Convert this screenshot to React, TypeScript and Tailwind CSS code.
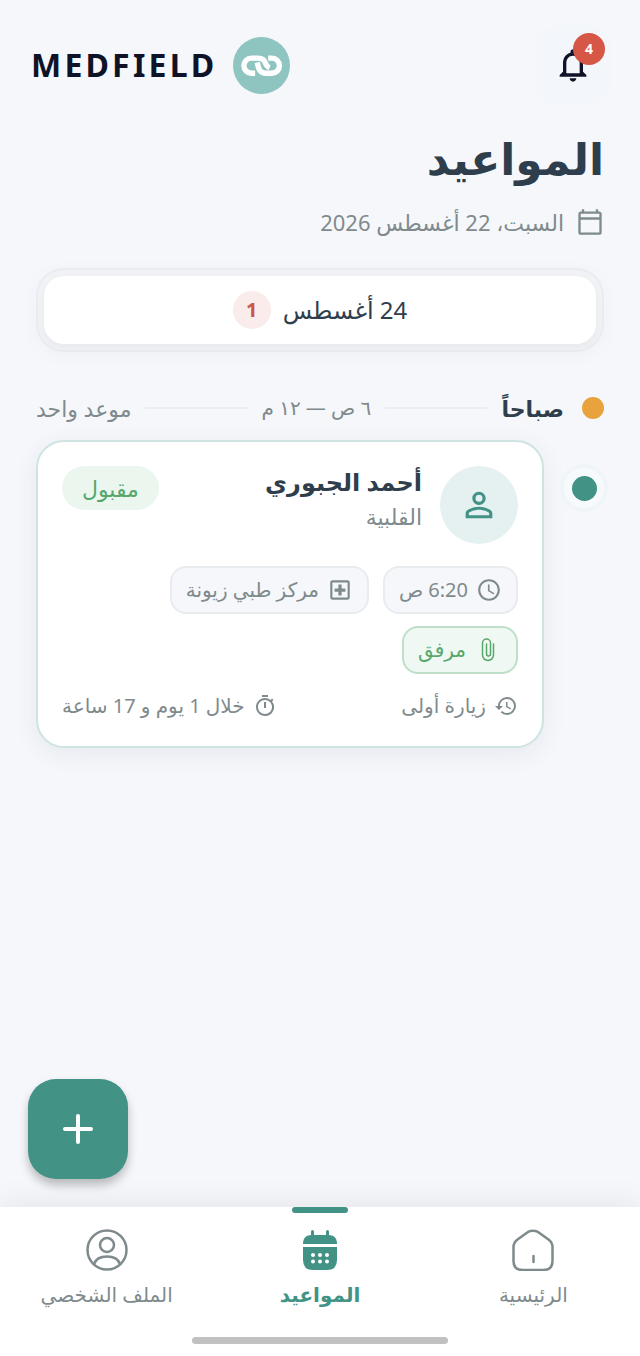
import type { ReactNode } from 'react'
import {
  MdAccessTime,
  MdHistory,
  MdNotificationsNone,
  MdOutlineCalendarToday,
  MdOutlineLocalHospital,
  MdOutlineTimer,
  MdPersonOutline,
} from 'react-icons/md'

function ChainLogo() {
  return (
    <svg viewBox="0 0 170 170" className="size-[57px]" aria-hidden="true">
      <circle cx="85" cy="85" r="85" fill="#8fc5c0" />
      <g fill="none" stroke="#fff" strokeWidth="16">
        <path d="M66 108H55a22.500 22.500 0 0 1 0-45H75Q91 63 96 76Q100 88 109 92" />
        <path d="M105 63H116a22.500 22.500 0 0 1 0 45H98Q82 108 77 94Q74 84 72 76" />
      </g>
    </svg>
  )
}

function ClipIcon() {
  return (
    <svg viewBox="0 0 28 28" className="size-7" fill="none" stroke="currentColor" strokeWidth="1.5" strokeLinecap="round" aria-hidden="true">
      <path d="M19.500 8v11a5.500 5.500 0 0 1-11 0V7a4 4 0 0 1 8 0v11a2 2 0 0 1-4 0V8" />
    </svg>
  )
}

function HomeIcon() {
  return (
    <svg viewBox="0 0 42 42" className="size-[42px]" fill="none" stroke="currentColor" strokeWidth="2.5" strokeLinecap="round" strokeLinejoin="round" aria-hidden="true">
      <path d="M16 2.900Q21 .5 26 2.900L36.500 10.500Q40.500 13.500 40.500 18V32Q40.500 41 31.500 41H10.500Q1.500 41 1.500 32V18Q1.500 13.500 5.500 10.500Z" />
      <path d="M21.500 27v6" />
    </svg>
  )
}

function CalendarIcon() {
  return (
    <svg viewBox="0 0 36 42" className="h-[42px] w-9" fill="currentColor" aria-hidden="true">
      <rect x="9" y="1" width="3" height="9" rx="1.500" />
      <rect x="24" y="1" width="3" height="9" rx="1.500" />
      <path d="M1 15C1 9 4 6 10 6H26C32 6 35 9 35 15Z" />
      <path d="M1 18H35V31Q35 41 25 41H11Q1 41 1 31Z" />
      <g fill="#fff">
        <circle cx="11" cy="26" r="2" />
        <circle cx="18" cy="26" r="2" />
        <circle cx="25" cy="26" r="2" />
        <circle cx="11" cy="32.500" r="2" />
        <circle cx="18" cy="32.500" r="2" />
        <circle cx="25" cy="32.500" r="2" />
      </g>
    </svg>
  )
}

function ProfileIcon() {
  return (
    <svg viewBox="0 0 42 42" className="size-[42px]" fill="none" stroke="currentColor" strokeWidth="2.500" aria-hidden="true">
      <circle cx="21" cy="21" r="19.500" />
      <circle cx="21" cy="16" r="7" />
      <path d="M8 35C10 29 15 27.500 21 27.500S32 29 34 35" />
    </svg>
  )
}

function Chip({ icon, text, green }: { icon: ReactNode; text: string; green?: boolean }) {
  return (
    <li
      className={
        green
          ? 'flex h-12 items-center gap-2 rounded-2xl border-2 border-[#bfe0c8] bg-[#eff8f2] px-3.5 text-[#57a76c]'
          : 'flex h-12 items-center gap-2 rounded-2xl border-2 border-[#e9ecef] bg-[#f5f7fb] px-3.5 text-[#7f8a8c]'
      }
    >
      {icon}
      <span className="text-xl leading-7">{text}</span>
    </li>
  )
}

function NavItem({ icon, text, active }: { icon: ReactNode; text: string; active?: boolean }) {
  return (
    <li className="flex-1">
      <a
        href="#"
        aria-current={active ? 'page' : undefined}
        className={
          active
            ? 'flex flex-col items-center text-xl leading-7 font-bold text-[#429286]'
            : 'flex flex-col items-center text-xl leading-7 text-[#7f8a8c]'
        }
      >
        <span className={active ? 'mb-4 h-1.5 w-14 rounded-full bg-[#429286]' : 'mb-4 h-1.5 w-14'} />
        {icon}
        <span className="mt-2.5">{text}</span>
      </a>
    </li>
  )
}

export default function App() {
  return (
    <div
      dir="rtl"
      lang="ar"
      className="flex min-h-screen flex-col bg-[#f5f7fb] font-['Noto_Sans','DejaVu_Sans',sans-serif] text-[#2f3e4c]"
    >
      <header className="flex items-center justify-between pt-[26px] pr-7 pl-[31px]">
        <button
          type="button"
          aria-label="الإشعارات"
          className="relative flex size-[78px] items-center justify-center rounded-3xl bg-[#f3f7fb] text-[#0f1328]"
        >
          <MdNotificationsNone className="size-10" />
          <span className="absolute top-[7px] right-[7px] flex size-8 items-center justify-center rounded-full bg-[#d65745] text-sm font-bold text-white">
            4
          </span>
        </button>
        <div className="flex items-center gap-4">
          <ChainLogo />
          <span className="text-[32px] leading-10 font-bold tracking-widest text-[#0f1328]" dir="ltr">
            MEDFIELD
          </span>
        </div>
      </header>

      <main className="flex flex-1 flex-col px-9 pt-[26px]">
        <h1 className="text-[44px] leading-[56px] font-bold">المواعيد</h1>
        <p className="mt-5 flex items-center gap-3 text-[#7f8a8c]">
          <MdOutlineCalendarToday className="size-7" />
          <span className="text-[22px] leading-8">السبت، 22 أغسطس 2026</span>
        </p>

        <div className="mt-[30px] rounded-[28px] border-2 border-[#e9edf1] bg-[#f0f2f5] p-1.5 shadow-[0_4px_20px_rgba(47,62,76,0.03)]">
          <button
            type="button"
            aria-pressed="true"
            className="flex h-[68px] w-full items-center justify-center gap-3 rounded-[20px] bg-white shadow-[0_4px_8px_rgba(0,0,0,0.04)]"
          >
            <span className="text-2xl leading-8">24 أغسطس</span>
            <span className="flex size-[38px] items-center justify-center rounded-full bg-[#f9eceb] text-xl font-bold text-[#c9584a]">
              1
            </span>
          </button>
        </div>

        <section className="mt-10">
          <div className="flex items-center gap-3.5">
            <span className="size-[22px] rounded-full bg-[#e8a33d]" />
            <h2 className="ms-1 text-[22px] leading-8 font-bold">صباحاً</h2>
            <span className="h-0.5 flex-1 bg-[#eaedf1]" />
            <span className="text-xl leading-8 text-[#7f8a8c]">٦ ص — ١٢ م</span>
            <span className="h-0.5 flex-1 bg-[#eaedf1]" />
            <span className="text-[22px] leading-8 text-[#7f8a8c]">موعد واحد</span>
          </div>

          <div className="mt-4 flex items-start gap-4">
            <div className="-ms-1 mt-6 flex size-12 shrink-0 items-center justify-center rounded-full border-4 border-[#f0f6f8] bg-[#f7fafc]">
              <span className="size-[25px] rounded-full bg-[#429286]" />
            </div>
            <article className="flex-1 rounded-[28px] border-2 border-[#cfe4e1] bg-white p-6 shadow-[0_6px_24px_rgba(47,62,76,0.08)]">
              <div className="flex items-start gap-[18px]">
                <div className="flex size-[78px] items-center justify-center rounded-full bg-[#e5f1f1] text-[#429286]">
                  <MdPersonOutline className="size-10" />
                </div>
                <div className="flex-1">
                  <h3 className="text-2xl leading-8 font-bold">أحمد الجبوري</h3>
                  <p className="mt-0.5 text-[22px] leading-8 text-[#7f8a8c]">القلبية</p>
                </div>
                <span className="flex h-11 items-center rounded-full bg-[#eaf6ee] px-5 text-[22px] leading-7 text-[#57a76c]">
                  مقبول
                </span>
              </div>

              <ul className="mt-[22px] flex flex-wrap gap-x-3.5 gap-y-3">
                <Chip icon={<MdAccessTime className="size-[26px]" />} text="6:20 ص" />
                <Chip icon={<MdOutlineLocalHospital className="size-[26px]" />} text="مركز طبي زيونة" />
                <Chip icon={<ClipIcon />} text="مرفق" green />
              </ul>

              <div className="mt-4 flex items-center justify-between text-xl leading-8 text-[#7f8a8c]">
                <span className="flex items-center gap-2">
                  <MdHistory className="size-6" />
                  زيارة أولى
                </span>
                <span className="flex items-center gap-2">
                  <MdOutlineTimer className="size-6" />
                  خلال 1 يوم و 17 ساعة
                </span>
              </div>
            </article>
          </div>
        </section>
      </main>

      <button
        type="button"
        aria-label="إضافة موعد"
        className="mb-7 ml-7 flex size-[100px] items-center justify-center self-end rounded-[28px] bg-[#429286] shadow-[0_6px_10px_rgba(0,0,0,0.25)]"
      >
        <svg viewBox="0 0 30 30" className="size-[30px]" stroke="#fff" strokeWidth="4" strokeLinecap="round" aria-hidden="true">
          <path d="M15 2v26M2 15h26" />
        </svg>
      </button>

      <nav className="bg-white pb-3 shadow-[0_-4px_28px_rgba(0,0,0,0.07)]">
        <ul className="flex">
          <NavItem icon={<HomeIcon />} text="الرئيسية" />
          <NavItem icon={<CalendarIcon />} text="المواعيد" active />
          <NavItem icon={<ProfileIcon />} text="الملف الشخصي" />
        </ul>
        <div className="mx-auto mt-7 h-[7px] w-2/5 rounded-full bg-[#c1c1c1]" />
      </nav>
    </div>
  )
}
